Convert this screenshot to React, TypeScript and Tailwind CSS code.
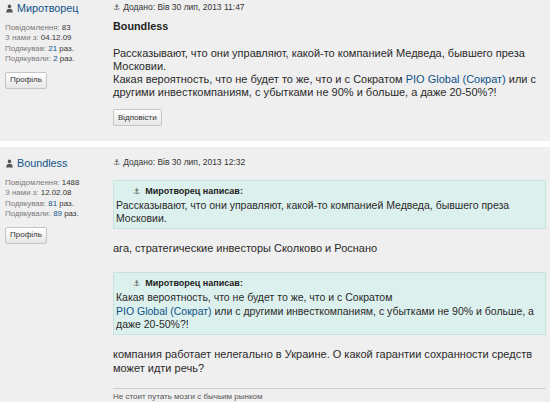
import React from "react";

const UserIcon = () => (
  <svg width="9" height="9" viewBox="0 0 9 9" className="shrink-0">
    <circle cx="4.5" cy="2.4" r="1.8" fill="#555" />
    <path d="M1 8.5 L2.2 5.2 Q4.5 4.3 6.8 5.2 L8 8.5 Z" fill="#555" />
  </svg>
);

const Anchor = () => (
  <span className="font-[DejaVu_Sans,sans-serif] text-[8px] text-[#444] mr-[3px]">⚓</span>
);

const Btn = ({ children }: { children: React.ReactNode }) => (
  <div className="inline-flex items-center h-[17px] px-[4px] border border-[#c5c5c5] rounded-[2px] bg-gradient-to-b from-white to-[#e6e6e6] text-[8px] leading-[10px] text-[#333]">
    {children}
  </div>
);

const Stat = ({ label, value, link, suffix }: { label: string; value: string; link?: boolean; suffix?: string }) => (
  <div>
    <span className="text-[#7a7a7a]">{label} </span>
    <span className={link ? "text-[#105289]" : "text-[#333]"}>{value}</span>
    {suffix && <span className="text-[#333]"> {suffix}</span>}
  </div>
);

const Profile = ({ name, stats }: { name: string; stats: [string, string, string, string] }) => (
  <div className="w-[113px] shrink-0 pl-[5px]">
    <div className="flex items-center gap-[3px] h-[14px] text-[10.8px] text-[#105289] leading-[14px]">
      <UserIcon />
      <span>{name}</span>
    </div>
    <div className="mt-[8px] text-[7.9px] leading-[10.4px]">
      <Stat label="Повідомлення:" value={stats[0]} />
      <Stat label="З нами з:" value={stats[1]} />
      <Stat label="Подякував:" value={stats[2]} link suffix="раз." />
      <Stat label="Подякували:" value={stats[3]} link suffix="раз." />
    </div>
    <div className="mt-[7px] flex">
      <Btn>Профіль</Btn>
    </div>
  </div>
);

const Added = ({ time }: { time: string }) => (
  <div className="text-[8.5px] leading-[11px] text-[#333] flex items-center">
    <Anchor />
    <span>Додано: Вів 30 лип, 2013 {time}</span>
  </div>
);

const Quote = ({ children }: { children: React.ReactNode }) => (
  <div className="bg-[#dcf0ed] border border-[#c6e3de] pl-[2px] pr-[4px] pt-[5px] pb-[2px]">
    <div className="pl-[17px] text-[9px] leading-[11px] font-bold text-[#222] flex items-center">
      <Anchor />
      <span className="ml-[2px]">Миротворец написав:</span>
    </div>
    <div className="mt-[2px] text-[10.5px] leading-[13.4px] text-[#2a2a2a]">{children}</div>
  </div>
);

const Link = ({ children }: { children: React.ReactNode }) => <span className="text-[#105289]">{children}</span>;

export default function App() {
  return (
    <div className="w-[550px] h-[402px] overflow-hidden bg-white font-[Liberation_Sans,Arial,sans-serif]">
      <div className="-mt-[8px]">
        {/* Post 1 */}
        <div className="flex bg-[#efefef] pt-[9px] h-[149px]">
          <Profile name="Миротворец" stats={["83", "04.12.09", "21", "2"]} />
          <div className="flex-1 pr-[4px] pt-[1px]">
            <Added time="11:47" />
            <div className="mt-[6px] text-[10.8px] leading-[15px] font-bold text-[#222]">Boundless</div>
            <div className="mt-[12.5px] text-[11px] leading-[13.3px] text-[#2a2a2a]">
              <div>Рассказывают, что они управляют, какой-то компанией Медведа, бывшего преза</div>
              <div>Московии.</div>
              <div>
                Какая вероятность, что не будет то же, что и с Сократом <Link>PIO Global (Сократ)</Link> или с
              </div>
              <div>другими инвесткомпаниям, с убытками не 90% и больше, а даже 20-50%?!</div>
            </div>
            <div className="mt-[9.5px] flex">
              <Btn>Відповісти</Btn>
            </div>
          </div>
        </div>

        <div className="h-[6px] bg-white" />

        {/* Post 2 */}
        <div className="flex bg-[#efefef] pt-[9px] h-[260px]">
          <Profile name="Boundless" stats={["1488", "12.02.08", "81", "89"]} />
          <div className="flex-1 pr-[4px] pt-[1px]">
            <Added time="12:32" />
            <div className="mt-[12px]">
              <Quote>
                <div>Рассказывают, что они управляют, какой-то компанией Медведа, бывшего преза</div>
                <div>Московии.</div>
              </Quote>
            </div>
            <div className="mt-[13px] text-[11px] leading-[13.5px] text-[#2a2a2a]">
              ага, стратегические инвесторы Сколково и Роснано
            </div>
            <div className="mt-[17px]">
              <Quote>
                <div>Какая вероятность, что не будет то же, что и с Сократом</div>
                <div>
                  <Link>PIO Global (Сократ)</Link> или с другими инвесткомпаниям, с убытками не 90% и больше, а
                </div>
                <div>даже 20-50%?!</div>
              </Quote>
            </div>
            <div className="mt-[12px] text-[11px] leading-[14px] text-[#2a2a2a]">
              <div>компания работает нелегально в Украине. О какой гарантии сохранности средств</div>
              <div>может идти речь?</div>
            </div>
            <div className="mt-[13px] border-t border-[#cfcfcf] pt-[3px] text-[8px] leading-[10px] text-[#555]">
              Не стоит путать мозги с бычьим рынком
            </div>
          </div>
        </div>
      </div>
    </div>
  );
}
